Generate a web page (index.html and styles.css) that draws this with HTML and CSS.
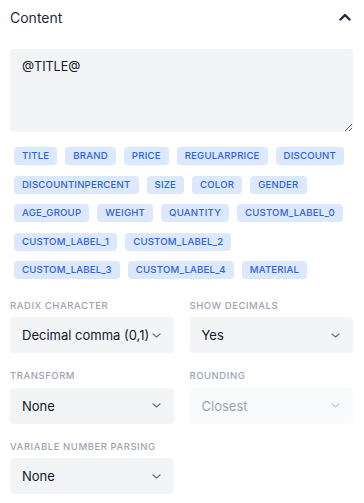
FILE: index.html
```html
<!DOCTYPE html>
<html lang="en">
<head>
    <meta charset="UTF-8">
    <meta name="viewport" content="width=device-width, initial-scale=1.0">
    <title>Content settings</title>
    <link rel="stylesheet" href="styles.css">
</head>
<body>
    <div class="panel">
        <div class="panel-header">
            <h2>Content</h2>
            <svg class="collapse-icon" width="12" height="8" viewBox="0 0 12 8">
                <path d="M1.5 6.5 L6 2 L10.5 6.5" fill="none" stroke="#1f2937" stroke-width="2.4" stroke-linecap="round" stroke-linejoin="round"/>
            </svg>
        </div>

        <textarea class="template-input">@TITLE@</textarea>

        <div class="tag-list">
            <div class="tag-row">
                <span class="tag">TITLE</span>
                <span class="tag">BRAND</span>
                <span class="tag">PRICE</span>
                <span class="tag">REGULARPRICE</span>
                <span class="tag">DISCOUNT</span>
            </div>
            <div class="tag-row">
                <span class="tag">DISCOUNTINPERCENT</span>
                <span class="tag">SIZE</span>
                <span class="tag">COLOR</span>
                <span class="tag">GENDER</span>
            </div>
            <div class="tag-row">
                <span class="tag">AGE_GROUP</span>
                <span class="tag">WEIGHT</span>
                <span class="tag">QUANTITY</span>
                <span class="tag">CUSTOM_LABEL_0</span>
            </div>
            <div class="tag-row">
                <span class="tag">CUSTOM_LABEL_1</span>
                <span class="tag">CUSTOM_LABEL_2</span>
            </div>
            <div class="tag-row">
                <span class="tag">CUSTOM_LABEL_3</span>
                <span class="tag">CUSTOM_LABEL_4</span>
                <span class="tag">MATERIAL</span>
            </div>
        </div>

        <div class="field-grid">
            <div class="field">
                <label>Radix character</label>
                <div class="select">
                    <span>Decimal comma (0,1)</span>
                    <svg class="chevron" width="9" height="5" viewBox="0 0 9 5"><path d="M1 1 L4.5 4 L8 1" fill="none" stroke="currentColor" stroke-width="1.2" stroke-linecap="round" stroke-linejoin="round"/></svg>
                </div>
            </div>
            <div class="field">
                <label>Show decimals</label>
                <div class="select">
                    <span>Yes</span>
                    <svg class="chevron" width="9" height="5" viewBox="0 0 9 5"><path d="M1 1 L4.5 4 L8 1" fill="none" stroke="currentColor" stroke-width="1.2" stroke-linecap="round" stroke-linejoin="round"/></svg>
                </div>
            </div>
            <div class="field">
                <label>Transform</label>
                <div class="select">
                    <span>None</span>
                    <svg class="chevron" width="9" height="5" viewBox="0 0 9 5"><path d="M1 1 L4.5 4 L8 1" fill="none" stroke="currentColor" stroke-width="1.2" stroke-linecap="round" stroke-linejoin="round"/></svg>
                </div>
            </div>
            <div class="field">
                <label>Rounding</label>
                <div class="select disabled">
                    <span>Closest</span>
                    <svg class="chevron" width="9" height="5" viewBox="0 0 9 5"><path d="M1 1 L4.5 4 L8 1" fill="none" stroke="currentColor" stroke-width="1.2" stroke-linecap="round" stroke-linejoin="round"/></svg>
                </div>
            </div>
            <div class="field">
                <label>Variable number parsing</label>
                <div class="select">
                    <span>None</span>
                    <svg class="chevron" width="9" height="5" viewBox="0 0 9 5"><path d="M1 1 L4.5 4 L8 1" fill="none" stroke="currentColor" stroke-width="1.2" stroke-linecap="round" stroke-linejoin="round"/></svg>
                </div>
            </div>
        </div>
    </div>
</body>
</html>
```

FILE: styles.css
```css
body {
    margin: 0;
    background: #fff;
    font-family: Inter, "Noto Sans", sans-serif;
    color: #111827;
}

.panel {
    padding: 0 11px 0 10px;
}

.panel-header {
    display: flex;
    align-items: center;
    justify-content: space-between;
    height: 34px;
}

.panel-header h2 {
    margin: 0;
    font-size: 14px;
    font-weight: 400;
    color: #1f2937;
}

.collapse-icon {
    margin-right: 2px;
}

.template-input {
    display: block;
    box-sizing: border-box;
    width: 100%;
    height: 83px;
    margin-top: 15px;
    padding: 8px 12px;
    border: none;
    border-radius: 4px;
    background: #f3f4f6;
    font-family: Inter, sans-serif;
    font-size: 12.5px;
    line-height: 19px;
    color: #111827;
    resize: vertical;
}

.tag-list {
    display: flex;
    flex-direction: column;
    gap: 10.5px;
    margin-top: 15px;
    padding: 0 4px;
}

.tag-row {
    display: flex;
    gap: 8px;
}

.tag {
    padding: 0 8px;
    height: 18px;
    line-height: 18px;
    border-radius: 4px;
    background: #dbe8fd;
    color: #2f62e0;
    font-size: 9.6px;
    font-weight: 500;
    letter-spacing: 0.2px;
    white-space: nowrap;
}

.field-grid {
    display: grid;
    grid-template-columns: 1fr 1fr;
    gap: 16px 16px;
    margin-top: 19.5px;
}

.field label {
    display: block;
    height: 14px;
    line-height: 14px;
    margin-bottom: 4.5px;
    font-size: 9.5px;
    font-weight: 500;
    letter-spacing: 0.55px;
    text-transform: uppercase;
    color: #9ca3af;
}

.select {
    display: flex;
    align-items: center;
    justify-content: space-between;
    height: 36px;
    padding: 0 13px 0 12px;
    border-radius: 4px;
    background: #f3f4f6;
    font-size: 13px;
    color: #111827;
    white-space: nowrap;
}

.select .chevron {
    flex-shrink: 0;
    color: #6b7280;
}

.select.disabled {
    background: #f9fafb;
    color: #9ca3af;
}

.select.disabled .chevron {
    color: #c4c8cf;
}
```
